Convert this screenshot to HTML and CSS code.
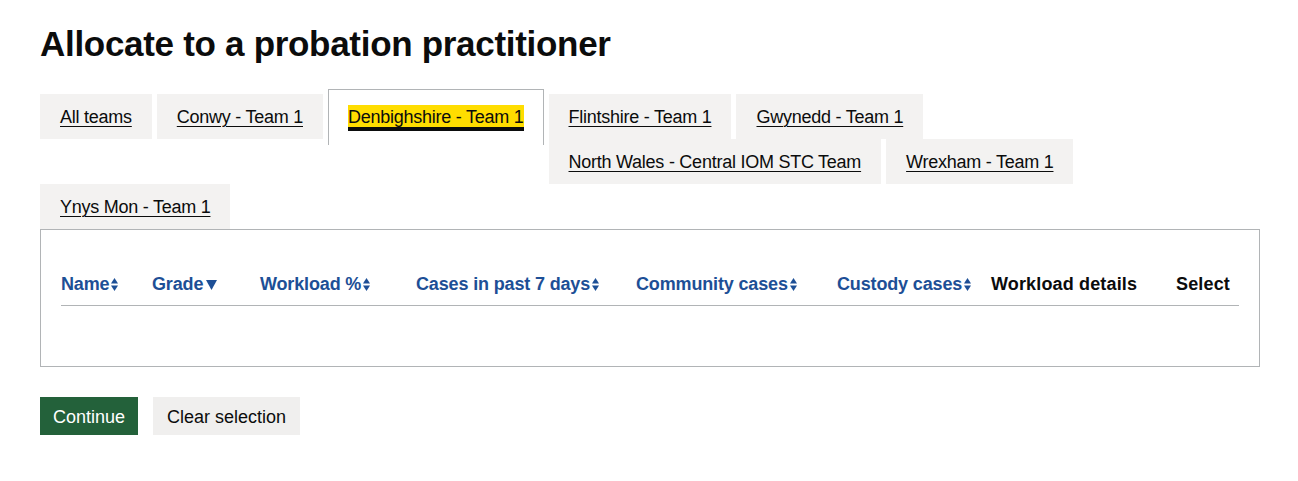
FILE: index.html
```html
<!DOCTYPE html>
<html lang="en">
<head>
<meta charset="utf-8">
<title>Allocate to a probation practitioner</title>
<link rel="stylesheet" href="styles.css">
</head>
<body>
<main class="page">
  <h1 class="heading">Allocate to a probation practitioner</h1>
  <div class="tabs">
    <ul class="tabs-list">
      <li class="tab"><a class="tab-link" href="#">All teams</a></li>
      <li class="tab"><a class="tab-link" href="#">Conwy - Team 1</a></li>
      <li class="tab tab-selected"><a class="tab-link tab-focus" href="#">Denbighshire - Team 1</a></li>
      <li class="tab"><a class="tab-link" href="#">Flintshire - Team 1</a></li>
      <li class="tab"><a class="tab-link" href="#">Gwynedd - Team 1</a></li>
      <li class="tab"><a class="tab-link" href="#">North Wales - Central IOM STC Team</a></li>
      <li class="tab"><a class="tab-link" href="#">Wrexham - Team 1</a></li>
      <li class="tab"><a class="tab-link" href="#">Ynys Mon - Team 1</a></li>
    </ul>
    <div class="panel">
      <table class="table">
        <thead>
          <tr>
            <th class="th col-name"><button class="sort">Name<svg class="arrows" width="7" height="13" viewBox="0 0 7 13"><polygon points="0,5.5 3.5,0 7,5.5"/><polygon points="0,7.5 3.5,13 7,7.5"/></svg></button></th>
            <th class="th col-grade"><button class="sort">Grade<svg class="arrow-down" width="11" height="10" viewBox="0 0 11 10"><polygon points="0,0 11,0 5.5,10"/></svg></button></th>
            <th class="th col-workload"><button class="sort">Workload %<svg class="arrows" width="7" height="13" viewBox="0 0 7 13"><polygon points="0,5.5 3.5,0 7,5.5"/><polygon points="0,7.5 3.5,13 7,7.5"/></svg></button></th>
            <th class="th col-cases"><button class="sort">Cases in past 7 days<svg class="arrows" width="7" height="13" viewBox="0 0 7 13"><polygon points="0,5.5 3.5,0 7,5.5"/><polygon points="0,7.5 3.5,13 7,7.5"/></svg></button></th>
            <th class="th col-community"><button class="sort">Community cases<svg class="arrows" width="7" height="13" viewBox="0 0 7 13"><polygon points="0,5.5 3.5,0 7,5.5"/><polygon points="0,7.5 3.5,13 7,7.5"/></svg></button></th>
            <th class="th col-custody"><button class="sort">Custody cases<svg class="arrows" width="7" height="13" viewBox="0 0 7 13"><polygon points="0,5.5 3.5,0 7,5.5"/><polygon points="0,7.5 3.5,13 7,7.5"/></svg></button></th>
            <th class="th col-details">Workload details</th>
            <th class="th col-select">Select</th>
          </tr>
        </thead>
        <tbody></tbody>
      </table>
    </div>
  </div>
  <div class="button-group">
    <button class="btn btn-primary">Continue</button>
    <button class="btn btn-secondary">Clear selection</button>
  </div>
</main>
</body>
</html>
```
FILE: styles.css
```css
html, body {
  margin: 0;
  padding: 0;
  background: #ffffff;
}
body {
  font-family: "Liberation Sans", Arial, sans-serif;
  color: #0b0c0c;
}
.page {
  width: 1220px;
  padding: 24px 0 0 40px;
}
.heading {
  margin: 0 0 30px;
  font-size: 35px;
  line-height: 40px;
  font-weight: 700;
  letter-spacing: -0.3px;
}
.tabs {
  margin-bottom: 30px;
}
.tabs-list {
  display: flow-root;
  list-style: none;
  margin: 0;
  padding: 0;
  border-bottom: 1px solid #b1b4b6;
}
.tab {
  float: left;
  margin: 0 5px 0 0;
  padding: 11px 20px 9px;
  background: #f3f2f1;
  font-size: 18px;
  line-height: 25px;
  letter-spacing: -0.25px;
  text-align: center;
}
.tab-selected {
  margin-top: -5px;
  margin-bottom: -1px;
  padding: 15px 19px 15px;
  border: 1px solid #b1b4b6;
  border-bottom: 0;
  background: #ffffff;
}
.tab-link {
  color: #0b0c0c;
  text-decoration: underline;
  text-decoration-thickness: 1px;
  text-underline-offset: 0.1578em;
}
.tab-focus {
  background: #ffdd00;
  box-shadow: 0 -2px #ffdd00, 0 4px #0b0c0c;
  text-decoration: none;
}
.panel {
  padding: 30px 20px;
  border: 1px solid #b1b4b6;
  border-top: 0;
}
.table {
  width: 100%;
  margin: 0 0 30px;
  border-collapse: collapse;
  border-spacing: 0;
  table-layout: fixed;
}
.th {
  box-sizing: border-box;
  padding: 12px 0 8px;
  border-bottom: 1px solid #b1b4b6;
  text-align: left;
  font-size: 18px;
  line-height: 25px;
  font-weight: 700;
  color: #0b0c0c;
  white-space: nowrap;
}
.col-name { width: 91px; }
.col-grade { width: 108px; }
.col-workload { width: 156px; }
.col-cases { width: 220px; }
.col-community { width: 201px; }
.col-custody { width: 154px; }
.col-details { width: 185px; }
.col-select { width: 63px; }
.col-select,
.col-details {
  letter-spacing: 0.15px;
}
.sort {
  display: inline-flex;
  align-items: center;
  gap: 2px;
  margin: 0;
  padding: 0;
  border: 0;
  background: transparent;
  font: inherit;
  line-height: 25px;
  letter-spacing: -0.15px;
  color: #1d4f96;
  cursor: pointer;
}
.arrows,
.arrow-down {
  fill: #1d4f96;
  flex: none;
}
.arrow-down {
  margin-left: 1px;
}
.button-group {
  display: flex;
  gap: 15px;
  align-items: flex-start;
}
.btn {
  box-sizing: border-box;
  margin: 0;
  padding: 9px 11px 6px;
  border: 2px solid transparent;
  border-radius: 0;
  font-family: "Liberation Sans", Arial, sans-serif;
  font-size: 18px;
  line-height: 19px;
  cursor: pointer;
}
.btn-primary {
  background: #23613a;
  color: #ffffff;
  box-shadow: 0 2px 0 #0e2a18;
}
.btn-secondary {
  padding-left: 12px;
  padding-right: 12px;
  background: #f0efee;
  color: #0b0c0c;
  box-shadow: 0 2px 0 #8c8b8b;
}
```
